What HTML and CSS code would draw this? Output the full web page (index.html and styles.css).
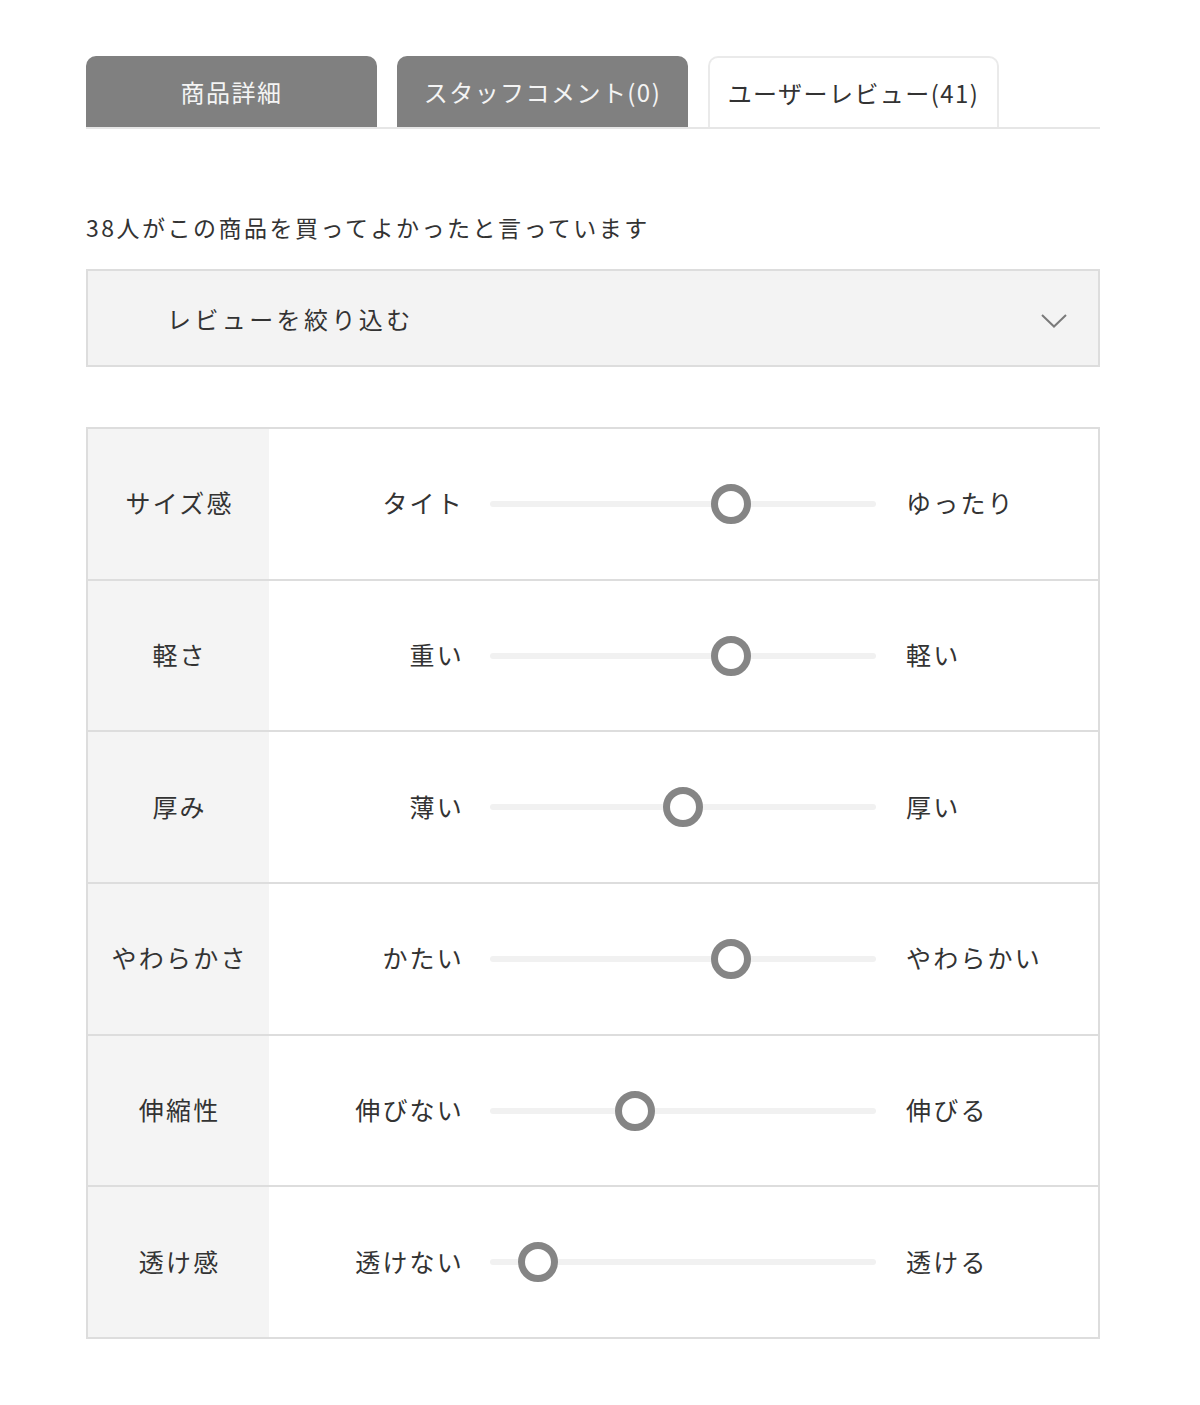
FILE: index.html
```html
<!DOCTYPE html>
<html lang="ja">
<head>
<meta charset="utf-8">
<title>ユーザーレビュー</title>
<link rel="stylesheet" href="styles.css">
</head>
<body>
<div class="page">
  <div class="tabs">
    <div class="tab tab-dark">商品詳細</div>
    <div class="tab tab-dark">スタッフコメント(0)</div>
    <div class="tab tab-active">ユーザーレビュー(41)</div>
  </div>

  <p class="summary">38人がこの商品を買ってよかったと言っています</p>

  <div class="filter">
    <span class="filter-label">レビューを絞り込む</span>
    <svg class="chevron" width="26" height="14" viewBox="0 0 26 14"><path d="M1 1 L13 12.5 L25 1" fill="none" stroke="#7a7a7a" stroke-width="2"/></svg>
  </div>

  <div class="table">
    <div class="row">
      <div class="row-head">サイズ感</div>
      <div class="row-body">
        <span class="lbl-left">タイト</span>
        <div class="track"><span class="knob" style="left:62.5%"></span></div>
        <span class="lbl-right">ゆったり</span>
      </div>
    </div>
    <div class="row">
      <div class="row-head">軽さ</div>
      <div class="row-body">
        <span class="lbl-left">重い</span>
        <div class="track"><span class="knob" style="left:62.5%"></span></div>
        <span class="lbl-right">軽い</span>
      </div>
    </div>
    <div class="row">
      <div class="row-head">厚み</div>
      <div class="row-body">
        <span class="lbl-left">薄い</span>
        <div class="track"><span class="knob" style="left:50%"></span></div>
        <span class="lbl-right">厚い</span>
      </div>
    </div>
    <div class="row">
      <div class="row-head">やわらかさ</div>
      <div class="row-body">
        <span class="lbl-left">かたい</span>
        <div class="track"><span class="knob" style="left:62.5%"></span></div>
        <span class="lbl-right">やわらかい</span>
      </div>
    </div>
    <div class="row">
      <div class="row-head">伸縮性</div>
      <div class="row-body">
        <span class="lbl-left">伸びない</span>
        <div class="track"><span class="knob" style="left:37.5%"></span></div>
        <span class="lbl-right">伸びる</span>
      </div>
    </div>
    <div class="row">
      <div class="row-head">透け感</div>
      <div class="row-body">
        <span class="lbl-left">透けない</span>
        <div class="track"><span class="knob" style="left:12.5%"></span></div>
        <span class="lbl-right">透ける</span>
      </div>
    </div>
  </div>
</div>
</body>
</html>
```

FILE: styles.css
```css
html, body {
  margin: 0;
  padding: 0;
  background: #ffffff;
}

body {
  font-family: "Noto Sans CJK JP", "Noto Sans", sans-serif;
  color: #333333;
}

.page {
  width: 1014px;
  margin-left: 86px;
  padding-top: 56px;
}

.tabs {
  display: flex;
  gap: 20px;
  border-bottom: 2px solid #e6e6e6;
}

.tab {
  box-sizing: border-box;
  width: 291px;
  height: 71px;
  border-radius: 10px 10px 0 0;
  display: flex;
  align-items: center;
  justify-content: center;
  font-size: 24px;
  letter-spacing: 0.06em;
  line-height: 1;
}

.tab-dark {
  background: #808080;
  color: #f4f4f4;
}

.tab-active {
  background: #ffffff;
  color: #333333;
  border: 2px solid #eaeaea;
  border-bottom: none;
}

.summary {
  margin: 81px 0 0 0;
  font-size: 23px;
  line-height: 34px;
  letter-spacing: 2.5px;
  color: #333333;
}

.filter {
  box-sizing: border-box;
  margin-top: 25px;
  height: 98px;
  background: #f3f3f3;
  border: 2px solid #dddddd;
  display: flex;
  align-items: center;
  justify-content: space-between;
  padding: 0 31px 0 79px;
}

.filter-label {
  font-size: 24px;
  letter-spacing: 3.4px;
  color: #333333;
}

.chevron {
  display: block;
  margin-top: 6px;
}

.table {
  margin-top: 60px;
  border: 2px solid #dddddd;
  border-bottom: none;
}

.row {
  display: flex;
  box-sizing: border-box;
  height: 151.7px;
  border-bottom: 2px solid #dddddd;
}

.row-head {
  width: 182px;
  background: #f4f4f4;
  display: flex;
  align-items: center;
  justify-content: center;
  font-size: 25px;
  letter-spacing: 2.2px;
  padding: 0 0 3px 2.2px;
  color: #333333;
}

.row-body {
  flex: 1;
  display: flex;
  align-items: center;
  padding-bottom: 3px;
  font-size: 25px;
  letter-spacing: 2.2px;
  color: #333333;
}

.lbl-left {
  width: 195px;
  margin-right: 26px;
  text-align: right;
}

.lbl-right {
  width: 192px;
  margin-left: 30px;
}

.track {
  position: relative;
  width: 386px;
  height: 6px;
  margin-top: 3px;
  background: #f1f1f1;
  border-radius: 3px;
}

.knob {
  position: absolute;
  top: 50%;
  box-sizing: border-box;
  width: 40px;
  height: 40px;
  margin: -20px 0 0 -20px;
  border: 7px solid #858585;
  border-radius: 50%;
  background: #ffffff;
}
```
